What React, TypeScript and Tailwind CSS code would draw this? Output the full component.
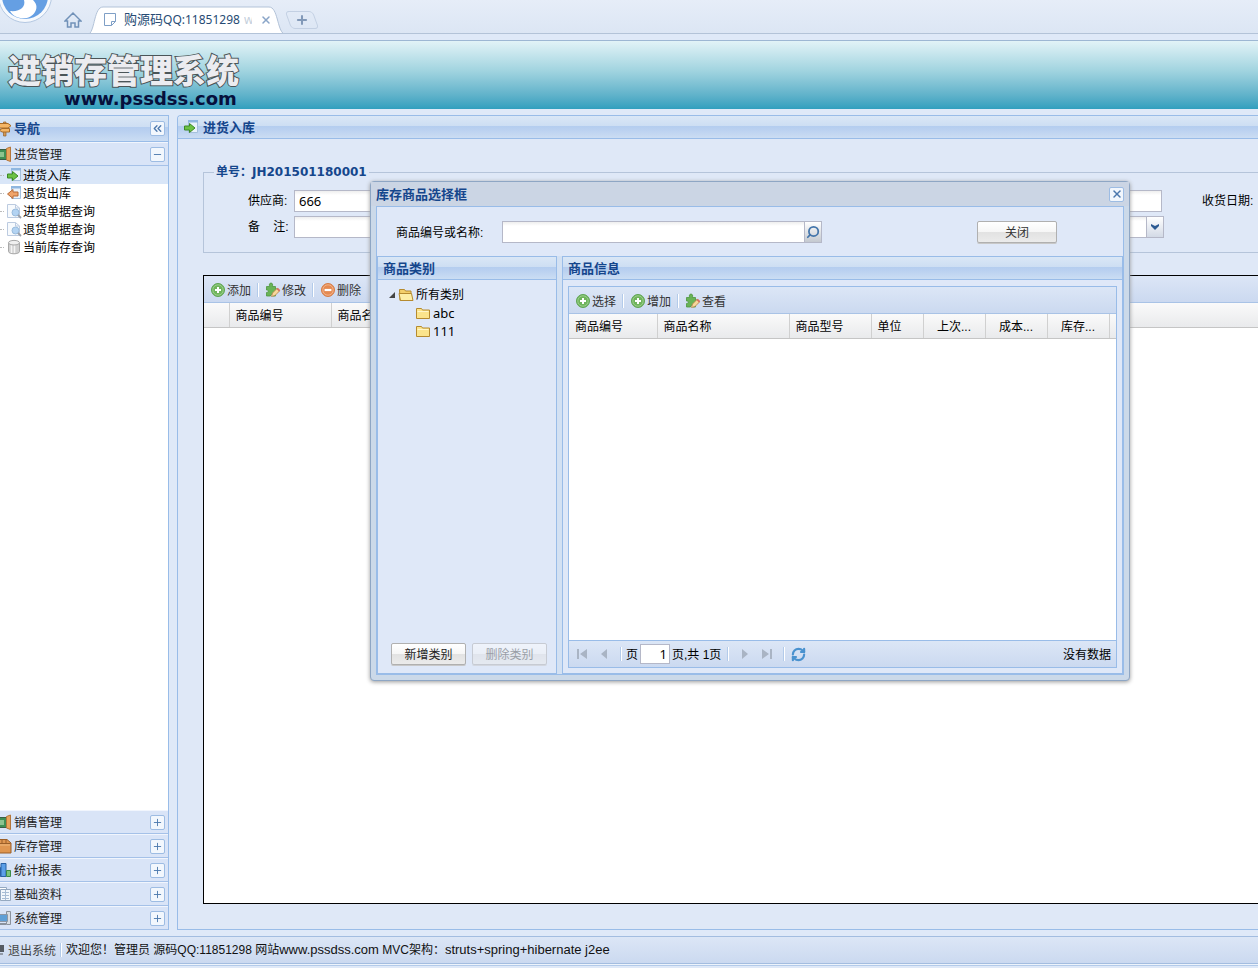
import React from 'react';
import { ChevronsLeft, Minus, Plus, RefreshCw, Search, X } from 'lucide-react';

const HEADER_BG =
  'bg-[linear-gradient(to_bottom,#dae7f6_0%,#cddef3_45%,#b4cdef_46%,#b9d0f0_60%,#cbddf3_100%)]';
const TOOLBAR_BG = 'bg-linear-to-b from-[#dce6f6] to-[#cbd9f0]';
const GRID_HEAD_BG = 'bg-linear-to-b from-[#fafafa] to-[#e9eaec]';
const BUTTON_BG =
  'bg-[linear-gradient(to_bottom,#ffffff_0%,#f6f6f6_50%,#e2e2e2_51%,#ebebeb_100%)]';

type IconName =
  | 'add'
  | 'remove'
  | 'edit'
  | 'in'
  | 'out'
  | 'find'
  | 'db'
  | 'sign'
  | 'door'
  | 'box'
  | 'chart'
  | 'doc'
  | 'pc'
  | 'folder'
  | 'open';

const Icon: React.FC<{ name: IconName }> = ({ name }) => (
  <svg width="16" height="16" viewBox="0 0 16 16" className="shrink-0" aria-hidden="true">
    {name === 'add' && (
      <>
        <circle cx="8" cy="8" r="6.5" fill="#6fb45c" stroke="#5fa553" />
        <circle cx="8" cy="8" r="5.2" fill="none" stroke="#a5d596" strokeWidth=".8" />
        <path d="M8 5v6M5 8h6" stroke="#fff" strokeWidth="2" />
      </>
    )}
    {name === 'remove' && (
      <>
        <circle cx="8" cy="8" r="6.5" fill="#e58a52" stroke="#d67d47" />
        <circle cx="8" cy="8" r="5.2" fill="none" stroke="#f5bd97" strokeWidth=".8" />
        <path d="M4.6 8h6.8" stroke="#fff" strokeWidth="2.2" />
      </>
    )}
    {name === 'edit' && (
      <>
        <path
          d="M1.500 4.500h3.200c-1-2 0-3.500 1.300-3.500s2.300 1.500 1.300 3.500h3.200v2.700c2-1 3.500 0 3.500 1.300s-1.500 2.200-3.500 1.300V14H7.500c.5-2-2.500-2-2 0h-4v-3.500c2.300.5 2.300-3 0-2.500z"
          fill="#69b356"
          stroke="#4c963e"
          strokeWidth=".8"
        />
        <path d="M6.500 14.500l1-3.500 4.500-4.500 2.500 2.500-4.500 4.500z" fill="#f7d79b" stroke="#b98445" strokeWidth=".8" />
        <path d="M11.500 7l1.300-1.300 2.500 2.500L14 9.500z" fill="#dd6f62" />
      </>
    )}
    {name === 'in' && (
      <>
        <path d="M5.500 1.500h9v12h-9z" fill="#e9f2fb" stroke="#a5c0dd" />
        <path d="M5 1h10v2.500H5z" fill="#8fb7e0" />
        <path d="M1.500 7h5V4.500L12 9l-5.500 4.500V11h-5z" fill="#6cc244" stroke="#3d8a26" />
      </>
    )}
    {name === 'out' && (
      <>
        <path d="M5.500 1.500h9v12h-9z" fill="#e9f2fb" stroke="#a5c0dd" />
        <path d="M5 1h10v2.500H5z" fill="#8fb7e0" />
        <path d="M12 7H7V4.500L1.500 9 7 13.500V11h5z" fill="#f0a46a" stroke="#b86a36" />
      </>
    )}
    {name === 'find' && (
      <>
        <path d="M1.500 1.500h8l4 3.500v9.500h-12z" fill="#f7fafd" stroke="#bccbe0" />
        <path d="M9.500 1.500V5h4" fill="none" stroke="#bccbe0" />
        <circle cx="9.500" cy="9.500" r="3.500" fill="#b3d3f2" stroke="#98bbdc" />
        <path d="M12 12l3 3" stroke="#9a9fa8" strokeWidth="1.800" />
      </>
    )}
    {name === 'db' && (
      <>
        <path d="M2.500 4v8.500c0 1.300 2.500 2.300 5.500 2.300s5.500-1 5.500-2.300V4z" fill="#d0d0d0" stroke="#a8a8a8" />
        <path d="M5.500 6v8M8.500 6v8" stroke="#f5f5f5" strokeWidth="1.500" />
        <ellipse cx="8" cy="3.700" rx="5.500" ry="2.300" fill="#f0f0f0" stroke="#a8a8a8" />
      </>
    )}
    {name === 'sign' && (
      <>
        <path d="M7.500 1h2.500v14H7.500z" fill="#d39a58" stroke="#94602a" strokeWidth=".7" />
        <path d="M1.500 2.500h10.500l3 2.200-3 2.300H1.500z" fill="#f4b565" stroke="#a86a26" />
        <path d="M13.500 7.500H6L3.500 9.300 6 11h7.500z" fill="#f4b565" stroke="#a86a26" />
      </>
    )}
    {name === 'door' && (
      <>
        <path d="M1 3.500h9.500v10H1z" fill="#3f8f55" stroke="#3a5e45" />
        <path d="M4 6h4v5H4z" fill="#8cc48f" />
        <path d="M10.500 2.500l4-1.500v14.500l-4-1.500z" fill="#e9a45c" stroke="#b4763a" />
      </>
    )}
    {name === 'box' && (
      <>
        <path d="M1 5.500L3.500 1.500H11L15 5v10H1z" fill="#df9650" stroke="#9b5f28" />
        <path d="M1 5.500h13.500M6 2v3.500M10 2v3.500" stroke="#9b5f28" fill="none" />
        <path d="M2 7h12" stroke="#f0b97d" />
      </>
    )}
    {name === 'chart' && (
      <>
        <path d="M1.500 5.500h3v9h-3z" fill="#4f8fd8" stroke="#2b62a5" />
        <path d="M5 1.500h5v13H5z" fill="#5c9fe8" stroke="#2b62a5" />
        <path d="M10.500 8.500h4v6h-4z" fill="#7cc47c" stroke="#3d8a46" />
      </>
    )}
    {name === 'doc' && (
      <>
        <path d="M1.500 1.500h9v11h-9z" fill="#fff" stroke="#95a9c1" />
        <path d="M4.500 3.500h10v11h-10z" fill="#f3f7fb" stroke="#95a9c1" />
        <path d="M6 6.500h7M6 9.500h7M6 12.500h7M9.500 4v10" stroke="#a9bdd4" />
      </>
    )}
    {name === 'pc' && (
      <>
        <path d="M10.500 1.500h4v13h-4z" fill="#d8dde3" stroke="#8a929d" />
        <path d="M1.500 4.500h10v7h-10z" fill="#5f9fd6" stroke="#8d97a5" />
        <path d="M4 14h6" stroke="#8a929d" strokeWidth="2" />
      </>
    )}
    {name === 'folder' && (
      <>
        <path d="M1.500 3.500h5l1 1.500h7v8.500h-13z" fill="#fbe48c" stroke="#b58a2f" />
        <path d="M2.500 6.500h11" stroke="#fff6c9" />
      </>
    )}
    {name === 'open' && (
      <>
        <path d="M1.500 2.500h5l1 1.500h5.500v9.500h-11z" fill="#f3cf6b" stroke="#b58a2f" />
        <path d="M2.500 13.500l-1.500-7h12.500l1.500 7z" fill="#fdeea6" stroke="#b58a2f" />
      </>
    )}
  </svg>
);

const Tool: React.FC<{ label: string; children: React.ReactNode }> = ({ label, children }) => (
  <button
    type="button"
    aria-label={label}
    className="flex size-[15px] items-center justify-center rounded-xs border border-[#9dbce3] bg-[#f2f7fd] text-[#4c78ad]"
  >
    {children}
  </button>
);

const Separator = () => <span className="h-3.5 w-0.5 border-l border-[#b3cbea] bg-white" />;

const ToolbarButton: React.FC<{ icon: IconName; label: string }> = ({ icon, label }) => (
  <button type="button" className="flex items-center gap-px text-[#333]">
    <Icon name={icon} />
    <span className="pt-0.5">{label}</span>
  </button>
);

const Toolbar: React.FC<{ items: { icon: IconName; label: string }[] }> = ({ items }) => (
  <div className={`flex h-[27px] shrink-0 items-center gap-1.5 border-b border-[#a9c3e6] px-1.5 pt-px ${TOOLBAR_BG}`}>
    {items.map((item, i) => (
      <React.Fragment key={item.label}>
        {i > 0 && <Separator />}
        <ToolbarButton {...item} />
      </React.Fragment>
    ))}
  </div>
);

interface Column {
  label: string;
  width: string;
  align?: string;
}

const Grid: React.FC<{ columns: Column[] }> = ({ columns }) => (
  <table className="w-full table-fixed border-collapse">
    <thead>
      <tr className={GRID_HEAD_BG}>
        {columns.map((col, i) => (
          <th
            key={i}
            scope="col"
            className={`h-6 truncate border-r border-b border-r-[#d0d0d0] border-b-[#c5c5c5] px-1.5 pt-0.5 font-normal last:border-r-0 ${col.width} ${col.align ?? 'text-left'}`}
          >
            {col.label}
          </th>
        ))}
      </tr>
    </thead>
  </table>
);

const BrowserBar = () => (
  <div className="relative h-[34px] shrink-0 overflow-hidden border-b border-[#b3c3d8] bg-linear-to-b from-[#e6edf8] to-[#dce6f4]">
    <svg className="absolute top-0 left-0" width="54" height="26" viewBox="0 0 54 26" aria-hidden="true">
      <circle cx="25" cy="-4" r="26.500" fill="#f6f9fd" stroke="#b4c8e2" />
      <circle cx="25" cy="-4" r="23" fill="#659fe3" />
      <path d="M24 0c2 7-4 12-14 11 5 9 20 10 25 1 3-5 1-9-2-12z" fill="#fff" />
    </svg>
    <div className="flex h-full items-end pl-16">
      <a href="#home" aria-label="主页" className="mb-1 mr-1">
        <svg width="18" height="18" viewBox="0 0 18 18" fill="none" stroke="#7191b8" strokeWidth="1.500">
          <path d="M1 10L9 2l8 8h-2.500v6h-3.500v-4H7v4H3.500v-6z" />
        </svg>
      </a>
      <div className="relative h-[27px] w-[200px]">
        <svg className="absolute inset-0" width="200" height="27" viewBox="0 0 200 27" aria-hidden="true">
          <path d="M3 28C9 24 8 1 17 1h166c9 0 8 23 15 27z" fill="#fff" stroke="#b3c3d8" />
        </svg>
        <div className="relative flex h-full items-center pl-[18px] font-['Noto_Sans','Noto_Sans_CJK_SC',sans-serif] text-[#274b74]">
          <svg width="12" height="13" viewBox="0 0 12 13" fill="none" stroke="#7f9fc6">
            <path d="M.5.500h11v8l-4 4h-7zM7.500 12.500v-4h4" />
          </svg>
          <span className="ml-2">
            <span className="text-[13px]">购源码</span>QQ:11851298
          </span>
          <span className="ml-1 w-2 overflow-hidden text-[#c4cfdc]">w</span>
          <button type="button" aria-label="关闭标签" className="ml-2 text-[#8aa5c8]">
            <X size={12} strokeWidth={3} />
          </button>
        </div>
      </div>
      <button
        type="button"
        aria-label="新标签"
        className="mb-1 ml-0.5 flex h-[18px] w-7 skew-x-[20deg] items-center justify-center rounded-sm border border-[#c3d0e3] text-[#8299b8]"
      >
        <Plus size={14} strokeWidth={3.5} className="-skew-x-[20deg]" />
      </button>
    </div>
  </div>
);

const Banner = () => (
  <header className="mt-1.5 h-[69px] shrink-0 border-t border-[#9db7d3] bg-linear-to-b from-[#e2f3f7] via-[#9fd3df] via-45% to-[#309fbe]">
    <h1 className="mt-[13px] ml-2 w-max text-[33px]/[36px] font-black text-[#ececf0] [-webkit-text-stroke:2px_#4b5558] [paint-order:stroke_fill]">
      进销存管理系统
    </h1>
    <p className="ml-16 w-max font-['DejaVu_Sans',sans-serif] text-[18px]/[18px] font-bold text-[#06103c]">
      www.pssdss.com
    </p>
  </header>
);

const NAV_ITEMS: { icon: IconName; label: string }[] = [
  { icon: 'in', label: '进货入库' },
  { icon: 'out', label: '退货出库' },
  { icon: 'find', label: '进货单据查询' },
  { icon: 'find', label: '退货单据查询' },
  { icon: 'db', label: '当前库存查询' },
];

const NAV_GROUPS: { icon: IconName; label: string }[] = [
  { icon: 'door', label: '销售管理' },
  { icon: 'box', label: '库存管理' },
  { icon: 'chart', label: '统计报表' },
  { icon: 'doc', label: '基础资料' },
  { icon: 'pc', label: '系统管理' },
];

const NavGroup: React.FC<{ icon: IconName; label: string; open?: boolean }> = ({ icon, label, open }) => (
  <div className="flex h-6 shrink-0 items-center border-t border-b border-t-[#f1f5fd] border-b-[#a5c1e8] bg-[#d9e4f7] pr-[3px] text-[#222]">
    <div className="-ml-1 mr-0.5">
      <Icon name={icon} />
    </div>
    <span className="flex-1 pt-px">{label}</span>
    <Tool label={open ? '收起' : '展开'}>
      {open ? <Minus size={11} /> : <Plus size={11} />}
    </Tool>
  </div>
);

const Sidebar = () => (
  <aside className="flex w-[169px] shrink-0 flex-col overflow-hidden border-t border-r border-[#99bce8] bg-white">
    <div className={`flex h-[26px] shrink-0 items-center border-b border-[#99bce8] pr-[3px] ${HEADER_BG}`}>
      <div className="-ml-1 mr-0.5">
        <Icon name="sign" />
      </div>
      <h2 className="flex-1 text-[13px] font-bold text-[#15468c]">导航</h2>
      <Tool label="折叠">
        <ChevronsLeft size={13} strokeWidth={2.5} />
      </Tool>
    </div>
    <NavGroup icon="door" label="进货管理" open />
    <nav className="flex-1">
      {NAV_ITEMS.map((item, i) => (
        <a
          key={item.label}
          href="#nav"
          className={`flex h-[18px] items-center text-black ${i === 0 ? 'bg-[#d9e6f8]' : ''}`}
        >
          <span className="mr-0.5 w-1 border-t border-dotted border-[#bbb]" />
          <Icon name={item.icon} />
          <span className="ml-px pt-px">{item.label}</span>
        </a>
      ))}
    </nav>
    {NAV_GROUPS.map(group => (
      <NavGroup key={group.label} {...group} />
    ))}
  </aside>
);

const FIELD =
  'h-[22px] border border-[#b5b8c8] bg-white bg-linear-to-b from-[#eeeeee] via-white via-20% to-white px-1 font-["Noto_Sans",sans-serif] text-[13px] outline-none';

const OrderForm = () => (
  <fieldset className="mt-[25px] ml-[25px] h-[89px] shrink-0 border border-r-0 border-[#b5c4da] pl-[34px]">
    <legend className="-ml-6 px-0.5 font-['DejaVu_Sans','Noto_Sans_CJK_SC',sans-serif] text-[12px]/[16px] font-bold text-[#15468c]">
      单号：JH201501180001
    </legend>
    <div className="flex w-max items-center pt-2.5">
      <label htmlFor="supplier" className="w-[52px] pl-2.5">
        供应商:
      </label>
      <input id="supplier" defaultValue="666" className={`ml-1 w-[300px] ${FIELD}`} />
      <input aria-label="联系人" className={`ml-[268px] w-[300px] ${FIELD}`} />
      <label htmlFor="date" className="ml-10 w-14">
        收货日期:
      </label>
      <input id="date" className={`w-[100px] ${FIELD}`} />
    </div>
    <div className="flex w-max items-center pt-1">
      <label htmlFor="remark" className="w-[52px] pl-2.5 whitespace-pre">
        备{'   '} 注:
      </label>
      <input id="remark" className={`ml-1 w-[300px] ${FIELD}`} />
      <div className="relative ml-[268px]">
        <select aria-label="仓库" className={`w-[302px] appearance-none ${FIELD}`} />
        <span className="pointer-events-none absolute top-0 right-0 flex h-[22px] w-[18px] items-center justify-center border border-[#b5b8c8] bg-linear-to-b from-white to-[#d3dae6]">
          <svg width="8" height="6" viewBox="0 0 8 6" aria-hidden="true">
            <path d="M0 0l4 2 4-2v2L4 6 0 2z" fill="#2c5a92" />
          </svg>
        </span>
      </div>
    </div>
  </fieldset>
);

const Workspace = () => (
  <main className="ml-2 flex min-w-0 flex-1 flex-col overflow-hidden rounded-tl-sm border border-r-0 border-[#99bce8] bg-[#dfe8f7]">
    <div className={`flex h-[23px] shrink-0 items-center gap-1 border-b border-[#99bce8] pl-[5px] ${HEADER_BG}`}>
      <Icon name="in" />
      <h2 className="pt-0.5 text-[13px] font-bold text-[#15468c]">进货入库</h2>
    </div>
    <OrderForm />
    <section className="mt-[22px] mb-[25px] ml-[25px] flex flex-1 flex-col border border-r-0 border-black bg-white">
      <Toolbar
        items={[
          { icon: 'add', label: '添加' },
          { icon: 'edit', label: '修改' },
          { icon: 'remove', label: '删除' },
        ]}
      />
      <Grid
        columns={[
          { label: '', width: 'w-[25px]' },
          { label: '商品编号', width: 'w-[102px]' },
          { label: '商品名称', width: '' },
        ]}
      />
    </section>
  </main>
);

const PageArrow: React.FC<{ label: string; d: string }> = ({ label, d }) => (
  <button type="button" disabled aria-label={label}>
    <svg width="12" height="12" viewBox="0 0 12 12" fill="#a9b4c4">
      <path d={d} />
    </svg>
  </button>
);

const PagingBar = () => (
  <div className={`flex h-[27px] shrink-0 items-center border-t border-[#99bce8] px-[7px] ${TOOLBAR_BG}`}>
    <div className="flex items-center gap-2.5">
      <PageArrow label="首页" d="M1 1h2v10H1zM11 1v10L4 6z" />
      <PageArrow label="上一页" d="M9 1v10L3 6z" />
      <Separator />
    </div>
    <label htmlFor="page" className="ml-1 pt-0.5">
      页
    </label>
    <input
      id="page"
      defaultValue="1"
      className="ml-0.5 h-5 w-[30px] border border-[#b5b8c8] bg-white px-0.5 text-right font-['Noto_Sans',sans-serif] text-[13px]"
    />
    <span className="ml-0.5 pt-0.5">页,共 1页</span>
    <div className="ml-1.5 flex items-center gap-2.5">
      <Separator />
      <PageArrow label="下一页" d="M3 1v10l6-5z" />
      <PageArrow label="末页" d="M9 1h2v10H9zM1 1v10l7-5z" />
      <Separator />
    </div>
    <button type="button" aria-label="刷新" className="ml-1.5 text-[#4a92cf]">
      <RefreshCw size={15} strokeWidth={3.5} />
    </button>
    <span className="-mr-0.5 ml-auto pt-0.5">没有数据</span>
  </div>
);

const PanelTitle: React.FC<{ children: React.ReactNode }> = ({ children }) => (
  <h3
    className={`flex h-[23px] shrink-0 items-center border-b border-[#99bce8] px-[5px] pt-0.5 text-[13px] font-bold text-[#15468c] ${HEADER_BG}`}
  >
    {children}
  </h3>
);

const BUTTON = `h-[22px] rounded-xs border pt-0.5 shadow-[0_1px_0_#c8c8c8] ${BUTTON_BG}`;

const CategoryPanel = () => (
  <section className="flex w-[180px] shrink-0 flex-col border border-[#99bce8]">
    <PanelTitle>商品类别</PanelTitle>
    <ul className="flex-1 pt-1.5">
      <li>
        <div className="flex h-[18px] items-center pl-2.5">
          <svg width="8" height="8" viewBox="0 0 8 8" className="mr-0.5" aria-hidden="true">
            <path d="M7 1v6H1z" fill="#444" />
          </svg>
          <Icon name="open" />
          <span className="ml-0.5">所有类别</span>
        </div>
        <ul className="font-['Noto_Sans',sans-serif] text-[13px]">
          {['abc', '111'].map(name => (
            <li key={name} className="flex h-[18px] items-center pl-[37px]">
              <Icon name="folder" />
              <span className="ml-0.5">{name}</span>
            </li>
          ))}
        </ul>
      </li>
    </ul>
    <div className="mb-2 flex gap-1.5 pl-[13px]">
      <button type="button" className={`w-[75px] border-[#b0b0b0] text-[#222] ${BUTTON}`}>
        新增类别
      </button>
      <button type="button" disabled className={`w-[75px] border-[#b0b0b0] text-[#555] opacity-50 ${BUTTON}`}>
        删除类别
      </button>
    </div>
  </section>
);

const ProductPanel = () => (
  <section className="flex min-w-0 flex-1 flex-col border border-[#99bce8]">
    <PanelTitle>商品信息</PanelTitle>
    <div className="m-[5px] mt-1.5 flex flex-1 flex-col border border-[#99bce8] bg-white">
      <Toolbar
        items={[
          { icon: 'add', label: '选择' },
          { icon: 'add', label: '增加' },
          { icon: 'edit', label: '查看' },
        ]}
      />
      <div className="flex-1">
        <Grid
          columns={[
            { label: '商品编号', width: 'w-[88px]' },
            { label: '商品名称', width: 'w-[132px]' },
            { label: '商品型号', width: 'w-[82px]' },
            { label: '单位', width: 'w-[52px]' },
            { label: '上次...', width: 'w-[62px]', align: 'text-center' },
            { label: '成本...', width: 'w-[62px]', align: 'text-center' },
            { label: '库存...', width: 'w-[62px]', align: 'text-center' },
            { label: '', width: '' },
          ]}
        />
      </div>
      <PagingBar />
    </div>
  </section>
);

const ProductDialog = () => (
  <div
    role="dialog"
    aria-labelledby="dialog-title"
    className="absolute top-[181px] left-[370px] flex h-[500px] w-[760px] flex-col rounded-sm border border-[#8ea6c4] bg-[#cbd9e9] px-[5px] pb-[5px] shadow-[0_1px_4px_#999]"
  >
    <div className="-mx-[5px] flex h-6 shrink-0 items-center justify-between bg-[#cbd5e4] px-[5px]">
      <h2 id="dialog-title" className="pt-0.5 text-[13px] font-bold text-[#15468c]">
        库存商品选择框
      </h2>
      <Tool label="关闭">
        <X size={12} strokeWidth={3} />
      </Tool>
    </div>
    <div className="flex flex-1 flex-col border border-[#99bce8] bg-[#dfe8f8]">
      <div className="flex h-[49px] items-center pl-[19px]">
        <label htmlFor="keyword" className="w-[106px] pt-0.5">
          商品编号或名称:
        </label>
        <input id="keyword" className={`w-[303px] ${FIELD}`} />
        <button
          type="button"
          aria-label="查询"
          className="flex h-[22px] w-[17px] items-center justify-center border border-l-0 border-[#b5b8c8] bg-linear-to-b from-white to-[#c4c9d0] text-[#4375ab]"
        >
          <Search size={14} strokeWidth={3} className="-scale-x-100" />
        </button>
        <button type="button" className={`ml-[155px] w-20 border-[#b0b0b0] text-[#333] ${BUTTON}`}>
          关闭
        </button>
      </div>
      <div className="flex flex-1 gap-[5px] bg-[#d3e1f3]">
        <div className="flex bg-[#dfe8f8]">
          <CategoryPanel />
        </div>
        <div className="flex min-w-0 flex-1 bg-[#dfe8f8]">
          <ProductPanel />
        </div>
      </div>
    </div>
  </div>
);

const StatusBar = () => (
  <footer
    className={`mt-1.5 mb-1 flex h-7 shrink-0 items-center overflow-hidden border-t border-b border-[#a3bde0] whitespace-nowrap shadow-[0_1px_0_#eef4fc,0_2px_0_#b3cbea] ${TOOLBAR_BG}`}
  >
    <button type="button" className="flex items-center text-[#444]">
      <svg width="5" height="12" viewBox="0 0 5 12" className="mr-[3px]" aria-hidden="true">
        <path d="M0 1h4v7H0z" fill="#555b63" />
        <path d="M0 10h3" stroke="#555b63" />
      </svg>
      <span className="pt-0.5">退出系统</span>
    </button>
    <span className="mx-1 flex">
      <Separator />
    </span>
    <p className="text-[#111]">
      欢迎您！管理员 源码QQ:11851298 网站
      <span className="text-[13px]">www.pssdss.com</span> MVC架构：
      <span className="text-[13px]">struts+spring+hibernate j2ee</span>
    </p>
  </footer>
);

export default function App() {
  return (
    <div className="relative flex h-screen flex-col overflow-hidden bg-[#dfe9f8] font-['Liberation_Sans','Noto_Sans_CJK_SC',sans-serif] text-[12px]/[16px] text-black">
      <BrowserBar />
      <Banner />
      <div className="mt-1.5 flex min-h-0 flex-1">
        <Sidebar />
        <Workspace />
      </div>
      <StatusBar />
      <ProductDialog />
    </div>
  );
}
